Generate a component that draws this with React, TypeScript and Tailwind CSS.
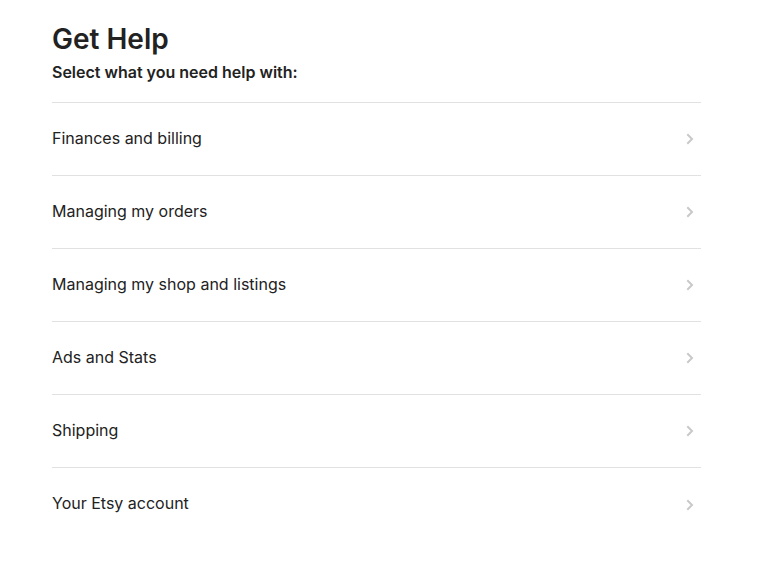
import React from "react";

const items = [
  "Finances and billing",
  "Managing my orders",
  "Managing my shop and listings",
  "Ads and Stats",
  "Shipping",
  "Your Etsy account",
];

function Chevron() {
  return (
    <svg width="8" height="12" viewBox="0 0 8 12" fill="none" className="shrink-0">
      <path d="M2 2l4 4-4 4" stroke="#c9c9c9" strokeWidth="2" strokeLinecap="square" />
    </svg>
  );
}

export default function App() {
  return (
    <div
      className="w-[766px] h-[562px] bg-white text-[#222222] pl-[52px] pr-[65px] pt-[20px]"
      style={{ fontFamily: "Inter, 'Noto Sans', sans-serif" }}
    >
      <h1 className="text-[28px] leading-[38px] font-semibold">Get Help</h1>
      <p className="text-[16px] leading-[20px] font-semibold mt-[4px] mb-[20px]">Select what you need help with:</p>
      <ul className="border-t border-[#e1e1e1]">
        {items.map((it, i) => (
          <li
            key={it}
            className={`h-[73px] flex items-center justify-between pr-[7px] ${i < items.length - 1 ? "border-b border-[#e1e1e1]" : ""}`}
          >
            <span className="text-[16px] leading-[24px] pb-[3px]">{it}</span>
            <Chevron />
          </li>
        ))}
      </ul>
    </div>
  );
}
